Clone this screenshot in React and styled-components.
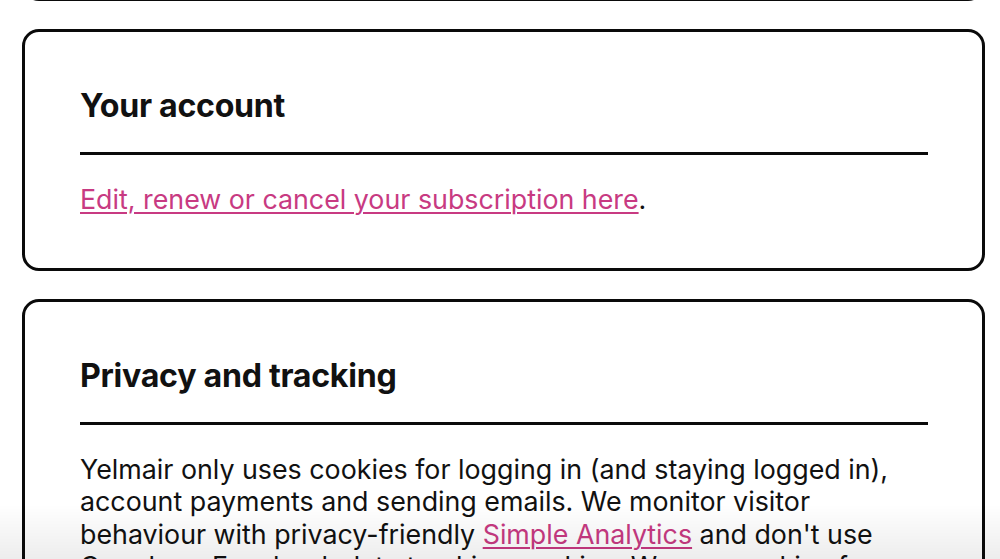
import React from "react";
import styled, { createGlobalStyle } from "styled-components";

const Global = createGlobalStyle`
  html, body { margin: 0; padding: 0; background: #fff; }
  *, *::before, *::after { box-sizing: border-box; }
  body {
    font-family: Inter, "Noto Sans", "Liberation Sans", sans-serif;
    color: #111;
    overflow: hidden;
    height: 559px;
  }
`;

const Page = styled.main`
  display: flex;
  flex-direction: column;
  gap: 28px;
  padding: 0 15px 40px 22px;
`;

const Card = styled.section`
  border: 3px solid #0a0a0a;
  border-radius: 17px;
  padding: 54px 54px 52px 55px;
  background: #fff;
  ${(p) => (p.$scrolledAway ? "height: 200px; margin-top: -199px;" : "")}
`;

const Heading = styled.h2`
  margin: 0 0 28px;
  font-size: 32.2px;
  line-height: 40px;
  font-weight: 700;
  letter-spacing: -0.3px;
  padding-bottom: 26px;
  border-bottom: 3px solid #0a0a0a;
`;

const Text = styled.p`
  margin: 0;
  font-size: 26.8px;
  line-height: 32.5px;
  font-weight: 400;
  color: #111;
`;

const Link = styled.a`
  color: #c83a82;
  text-decoration: underline;
  text-decoration-thickness: 2px;
  text-underline-offset: 3px;
`;

const Fade = styled.div`
  position: fixed;
  left: 0;
  right: 0;
  bottom: 0;
  height: 55px;
  pointer-events: none;
  background: linear-gradient(to bottom, rgba(0,0,0,0), rgba(0,0,0,0.07));
`;

export default function App() {
  return (
    <>
      <Global />
      <Page>
        <Card $scrolledAway />
        <Card>
          <Heading>Your account</Heading>
          <Text>
            <Link href="#">Edit, renew or cancel your subscription here</Link>.
          </Text>
        </Card>
        <Card>
          <Heading>Privacy and tracking</Heading>
          <Text>
            Yelmair only uses cookies for logging in (and staying logged in),
            account payments and sending emails. We monitor visitor
            behaviour with privacy-friendly <Link href="#">Simple Analytics</Link> and
            don't use Google or Facebook data tracking cookies. We use cookies for
            nothing else.
          </Text>
        </Card>
      </Page>
      <Fade />
    </>
  );
}
